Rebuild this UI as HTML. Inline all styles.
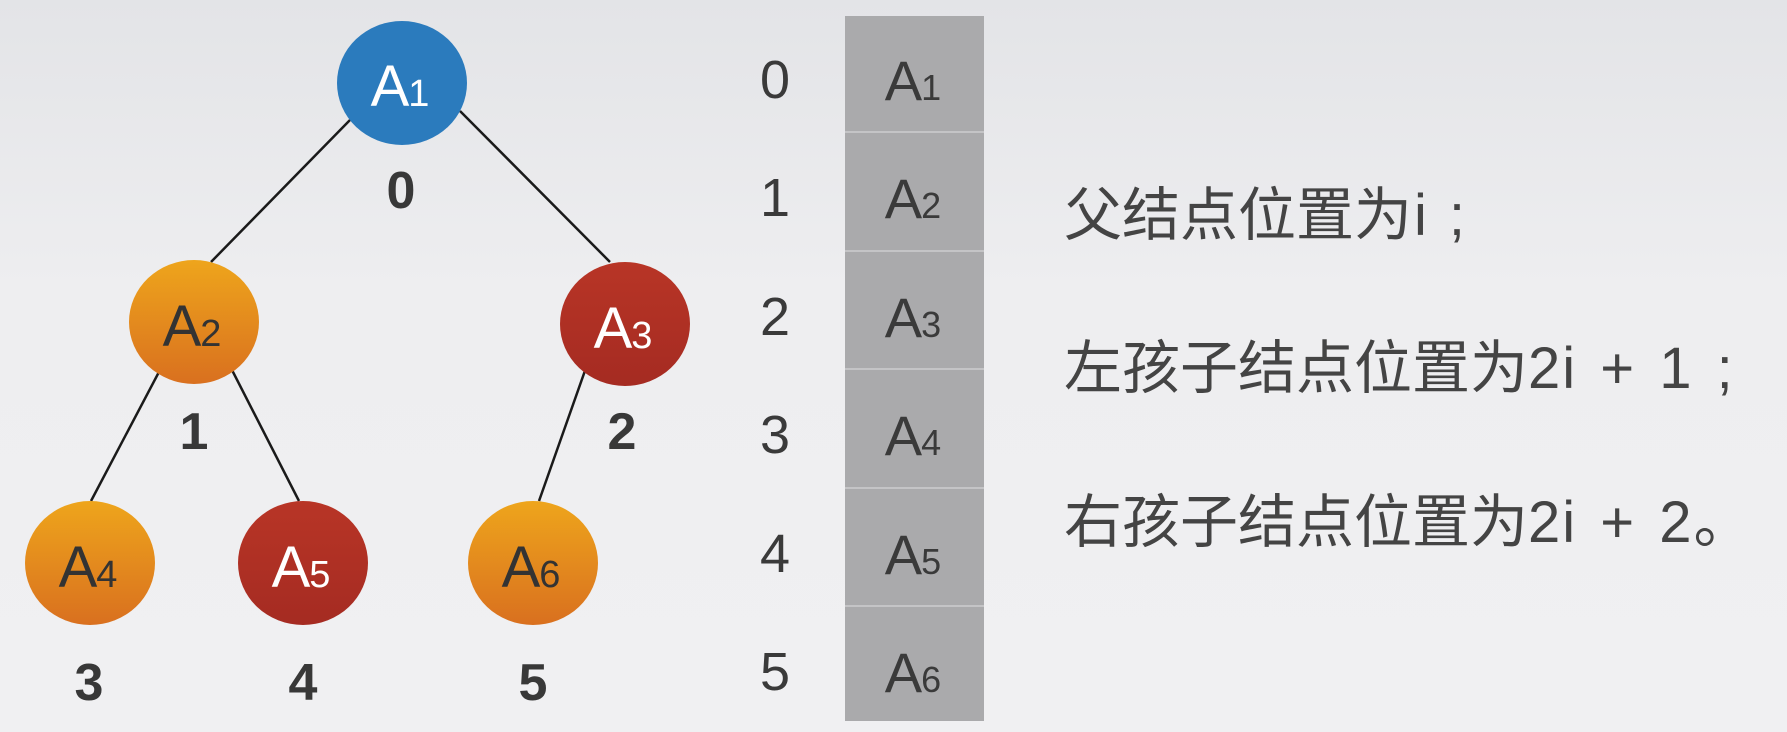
<!DOCTYPE html>
<html><head><meta charset="utf-8"><style>
html,body{margin:0;padding:0}
body{width:1787px;height:732px;overflow:hidden;background:linear-gradient(180deg,#e3e4e7 0%,#eeeef0 40%,#f0f0f2 100%);font-family:"Liberation Sans","Noto Sans CJK SC",sans-serif}
svg{position:absolute;left:0;top:0}
</style></head><body>
<svg width="1787" height="732" viewBox="0 0 1787 732">
<defs>
<linearGradient id="og" x1="0" y1="0" x2="0" y2="1"><stop offset="0" stop-color="#eea51c"/><stop offset="1" stop-color="#d9701f"/></linearGradient>
<linearGradient id="rg" x1="0" y1="0" x2="0" y2="1"><stop offset="0" stop-color="#b83526"/><stop offset="1" stop-color="#a52b22"/></linearGradient>
</defs>
<g stroke="#1a1a1a" stroke-width="2.5">
<line x1="350" y1="120" x2="211" y2="262"/>
<line x1="460" y1="111" x2="610" y2="262"/>
<line x1="160" y1="370" x2="91" y2="501"/>
<line x1="232" y1="370" x2="299" y2="501"/>
<line x1="587" y1="365" x2="539" y2="501"/>
</g>
<ellipse cx="402" cy="83" rx="65" ry="62" fill="#2b7bbd"/>
<ellipse cx="194" cy="322" rx="65" ry="62" fill="url(#og)"/>
<ellipse cx="625" cy="324" rx="65" ry="62" fill="url(#rg)"/>
<ellipse cx="90" cy="563" rx="65" ry="62" fill="url(#og)"/>
<ellipse cx="303" cy="563" rx="65" ry="62" fill="url(#rg)"/>
<ellipse cx="533" cy="563" rx="65" ry="62" fill="url(#og)"/>
<g font-family="Liberation Sans, sans-serif" font-size="58" text-anchor="middle">
<text x="400" y="106" fill="#fff">A<tspan dx="-1" font-size="38">1</tspan></text>
<text x="192" y="346" fill="#333">A<tspan dx="-1" font-size="38">2</tspan></text>
<text x="623" y="348" fill="#fff">A<tspan dx="-1" font-size="38">3</tspan></text>
<text x="88" y="587" fill="#333">A<tspan dx="-1" font-size="38">4</tspan></text>
<text x="301" y="587" fill="#fff">A<tspan dx="-1" font-size="38">5</tspan></text>
<text x="531" y="587" fill="#333">A<tspan dx="-1" font-size="38">6</tspan></text>
</g>
<g font-family="Liberation Sans, sans-serif" font-size="52" font-weight="bold" fill="#383838" text-anchor="middle">
<text x="401" y="208">0</text>
<text x="194" y="449">1</text>
<text x="622" y="449">2</text>
<text x="89" y="700">3</text>
<text x="303" y="700">4</text>
<text x="533" y="700">5</text>
</g>
<rect x="845" y="16" width="139" height="705" fill="#aaaaac"/>
<g stroke="#c4c4c6" stroke-width="2">
<line x1="845" y1="132" x2="984" y2="132"/>
<line x1="845" y1="251" x2="984" y2="251"/>
<line x1="845" y1="369" x2="984" y2="369"/>
<line x1="845" y1="488" x2="984" y2="488"/>
<line x1="845" y1="606" x2="984" y2="606"/>
</g>
<g font-family="Liberation Sans, sans-serif" font-size="56" fill="#3a3a3a" text-anchor="middle">
<text x="913" y="100">A<tspan dx="-1" font-size="36">1</tspan></text>
<text x="913" y="218">A<tspan dx="-1" font-size="36">2</tspan></text>
<text x="913" y="337">A<tspan dx="-1" font-size="36">3</tspan></text>
<text x="913" y="455">A<tspan dx="-1" font-size="36">4</tspan></text>
<text x="913" y="574">A<tspan dx="-1" font-size="36">5</tspan></text>
<text x="913" y="692">A<tspan dx="-1" font-size="36">6</tspan></text>
</g>
<g font-family="Liberation Sans, sans-serif" font-size="54" fill="#3a3a3a" text-anchor="middle">
<text x="775" y="98">0</text>
<text x="775" y="216">1</text>
<text x="775" y="335">2</text>
<text x="775" y="453">3</text>
<text x="775" y="572">4</text>
<text x="775" y="690">5</text>
</g>
<g font-family="Liberation Sans, Noto Sans CJK SC, sans-serif" font-size="58" fill="#444">
<text x="1064" y="235">父结点位置为<tspan dx="2">i</tspan><tspan dx="22">;</tspan></text>
<text x="1064" y="388">左孩子结点位置为<tspan letter-spacing="2" word-spacing="5">2i + 1 ;</tspan></text>
<text x="1064" y="542">右孩子结点位置为<tspan letter-spacing="2" word-spacing="5">2i + 2</tspan>。</text>
</g>
</svg>
</body></html>
